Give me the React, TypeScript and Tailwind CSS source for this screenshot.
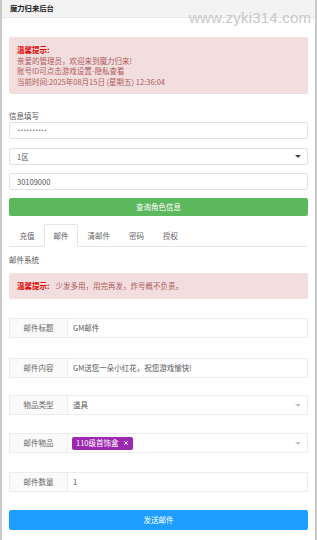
import { X } from "lucide-react";

const font = { fontFamily: '"Noto Sans CJK SC", "Liberation Sans", sans-serif' };

function Caret({ light }: { light?: boolean }) {
  return (
    <span
      className={`ml-auto mr-[6px] h-0 w-0 border-x-[3px] border-t-[3px] border-x-transparent ${
        light ? "border-t-[#c2c2c2]" : "border-t-[#444]"
      }`}
    />
  );
}

function InputGroup({
  label,
  children,
  className = "",
}: {
  label: string;
  children: React.ReactNode;
  className?: string;
}) {
  return (
    <div className={`flex h-[20px] border border-[#ececec] ${className}`}>
      <div className="flex w-[58px] items-center justify-center border-r border-[#ececec] bg-[#fafafa] text-[7.5px] text-[#666]">
        {label}
      </div>
      <div className="flex flex-1 items-center bg-white pl-[5px] text-[7.5px] text-[#555]">
        {children}
      </div>
    </div>
  );
}

export default function App() {
  const tabs = ["充值", "邮件", "清邮件", "密码", "授权"];

  return (
    <div
      className="relative h-[540px] w-[317px] overflow-hidden border-l-2 border-r-2 border-[#c9c9c9] bg-white"
      style={font}
    >
      {/* header */}
      <div className="flex h-[18px] items-center border-b border-[#e8e8e8] bg-[#f3f3f3] pl-[8px] text-[7.3px] font-bold text-[#222]">
        魔力归来后台
      </div>
      <div
        className="absolute left-[187px] top-[7px] text-[15px] tracking-[0.2px] text-[#c8c8c8]"
        style={{ fontFamily: '"Liberation Sans", sans-serif' }}
      >
        www.zyki314.com
      </div>

      <div className="px-[7px]">
        {/* welcome alert */}
        <div className="mt-[19px] rounded-[2px] bg-[#f2dede] px-[8px] pb-[7px] pt-[8px] text-[7.5px] leading-[10.5px] text-[#b05a5c]">
          <div className="font-bold text-[#e60000]">温馨提示:</div>
          <div>亲爱的管理员，欢迎来到魔力归来!</div>
          <div>账号ID可点击游戏设置-隐私查看</div>
          <div>当前时间:2025年08月15日 (星期五) 12:36:04</div>
        </div>

        {/* info form */}
        <div className="mt-[17px] text-[7.5px] leading-[10px] text-[#555]">信息填写</div>
        <div
          className="mt-[1px] flex h-[17px] items-center rounded-[2px] border border-[#e2e2e2] pl-[8px] text-[5px] tracking-[1.2px] text-[#666]"
          style={{ fontFamily: '"Liberation Sans", sans-serif' }}
        >
          ••••••••••
        </div>
        <div className="mt-[9px] flex h-[17px] items-center rounded-[2px] border border-[#e2e2e2] pl-[7px] text-[7.5px] text-[#555]">
          1区
          <Caret />
        </div>
        <div className="mt-[8px] flex h-[17px] items-center rounded-[2px] border border-[#e2e2e2] pl-[7px] text-[7.5px] text-[#555]">
          30109000
        </div>
        <div className="mt-[8px] flex h-[18px] items-center justify-center rounded-[2px] bg-[#5cb85c] text-[7.5px] text-white">
          查询角色信息
        </div>

        {/* tabs */}
        <div className="mt-[8px] flex h-[23px] border-b border-[#e6e6e6] pl-[1px]">
          {tabs.map((t) => (
            <div
              key={t}
              className={`-mb-px flex items-center px-[8.5px] text-[7.5px] ${
                t === "邮件"
                  ? "rounded-t-[2px] border border-[#e6e6e6] border-b-white bg-white text-[#555]"
                  : "border border-transparent text-[#666]"
              }`}
            >
              {t}
            </div>
          ))}
        </div>

        <div className="mt-[8px] text-[7.5px] leading-[10px] text-[#555]">邮件系统</div>

        <div className="mt-[8px] flex h-[26px] items-center rounded-[2px] bg-[#f2dede] px-[8px] text-[7.5px] text-[#b05a5c]">
          <span className="font-bold text-[#e60000]">温馨提示:</span>
          <span className="ml-[6px]">少发多用，用完再发，炸号概不负责。</span>
        </div>

        {/* mail form */}
        <InputGroup label="邮件标题" className="mt-[19px]">
          GM邮件
        </InputGroup>
        <InputGroup label="邮件内容" className="mt-[20px]">
          GM送您一朵小红花，祝您游戏愉快!
        </InputGroup>
        <InputGroup label="物品类型" className="mt-[17px]">
          道具
          <Caret light />
        </InputGroup>
        <InputGroup label="邮件物品" className="mt-[18px]">
          <span className="-ml-[1px] flex h-[13px] items-center rounded-[2px] bg-[#9c27b0] px-[4px] text-[7.5px] text-white">
            110级首饰盒
            <X className="ml-[4px] h-[6px] w-[6px]" strokeWidth={4} />
          </span>
          <Caret light />
        </InputGroup>
        <InputGroup label="邮件数量" className="mt-[19px]">
          1
        </InputGroup>

        <div className="mt-[18px] flex h-[20px] items-center justify-center rounded-[2px] bg-[#1e9fff] text-[7.5px] text-white">
          发送邮件
        </div>
      </div>
    </div>
  );
}
